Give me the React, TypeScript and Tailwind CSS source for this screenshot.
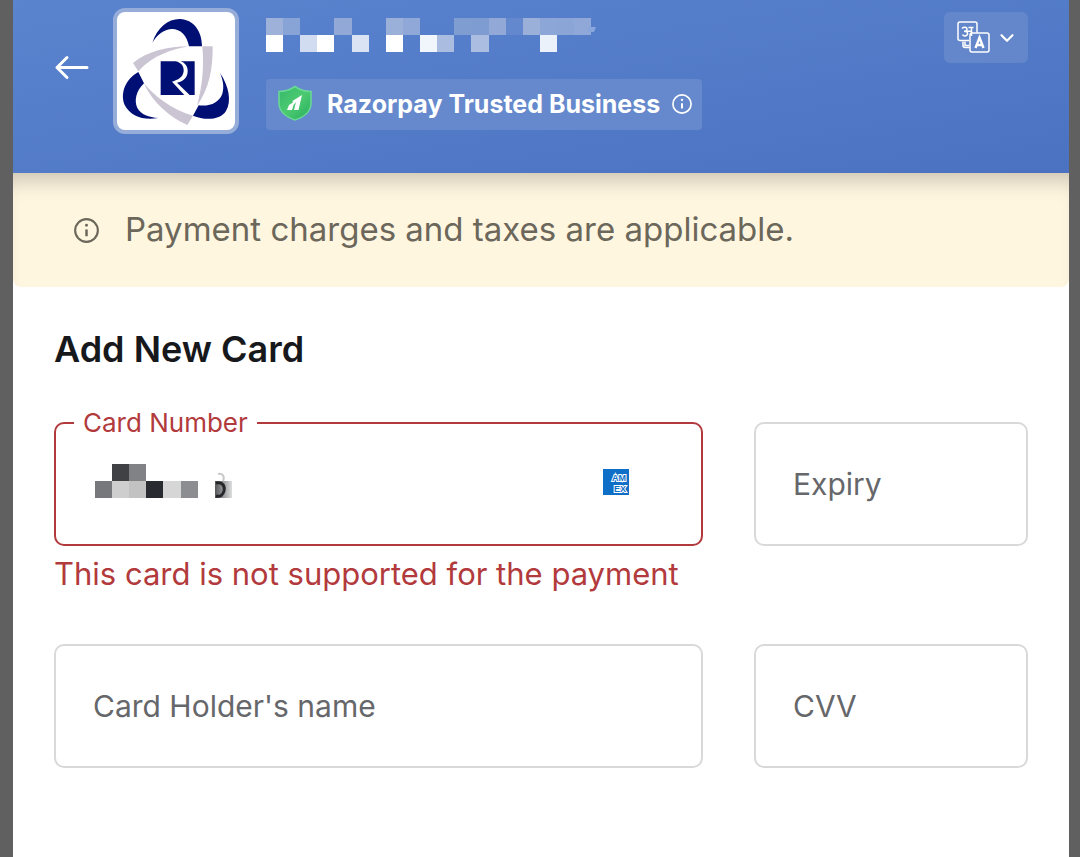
import { ChevronDown } from "lucide-react";

const CELL = 17;

type Cell = [col: number, row: number, color: string];

const nameCells: Cell[] = [
  [0, 0, "#9db1d9"], [1, 0, "#88a3d5"], [4, 0, "#92a9d8"], [7, 0, "#9ab0d9"], [8, 0, "#8fa8d7"],
  [11, 0, "#809dd2"], [12, 0, "#7f9cd2"], [13, 0, "#92a9d8"], [14, 0, "#6488cd"],
  [15, 0, "#9ab0d9"], [16, 0, "#8ba6d7"], [17, 0, "#8ba6d6"], [18, 0, "#8fa8d7"],
  [0, 1, "#ffffff"], [2, 1, "#d2dcf0"], [3, 1, "#ffffff"], [5, 1, "#dae3f3"], [7, 1, "#ffffff"],
  [9, 1, "#f1f5fc"], [10, 1, "#aabce0"], [12, 1, "#abbde1"], [16, 1, "#eaf1fb"],
];

const numberCells: Cell[] = [
  [1, 0, "#404145"], [2, 0, "#818286"], [0, 1, "#77787c"], [1, 1, "#cececf"], [2, 1, "#c2c2c3"],
  [3, 1, "#282c30"], [4, 1, "#d6d6d7"], [5, 1, "#8c8d90"],
];

function Cells({ cells }: { cells: Cell[] }) {
  return (
    <g shapeRendering="crispEdges">
      {cells.map(([c, r, fill]) => (
        <rect
          key={`${c}-${r}`}
          x={Math.round(c * 17.12)}
          y={r * CELL}
          width={Math.round((c + 1) * 17.12) - Math.round(c * 17.12)}
          height={CELL}
          fill={fill}
        />
      ))}
    </g>
  );
}

function InfoIcon({ className }: { className: string }) {
  return (
    <svg viewBox="0 0 24 24" fill="none" stroke="currentColor" className={className} aria-hidden="true">
      <circle cx="12" cy="12" r="10.9" strokeWidth="2" />
      <path d="M12 11v6.5" strokeWidth="2.4" />
      <circle cx="12" cy="7" r="1.4" fill="currentColor" stroke="none" />
    </svg>
  );
}

function MerchantLogo() {
  return (
    <svg viewBox="37 36 354 354" className="size-full" role="img" aria-label="Merchant logo">
      <g fill="#cbc5d3">
        <path d="M85 189C125 155 190 139 253 139C205 147 145 165 101 214Z" />
        <path d="M293 139H324C325 205 313 268 277 317C292 262 299 205 293 139Z" />
        <path d="M117 249C150 288 199 328 265 347L248 375C195 352 145 309 117 249Z" />
      </g>
      <g fill="#000f73">
        <path d="M143 129C157 82 192 56 226 57C266 59 292 92 292 139H253C247 105 226 86 200 87C175 89 155 107 143 129Z" />
        <path d="M101 216L118 250C94 273 88 302 98 324C109 344 133 352 161 354C116 363 76 347 60 315C46 280 62 238 101 216Z" />
        <path d="M346 219C372 257 382 304 364 333C346 362 298 361 265 347L282 316C317 320 344 307 353 281C359 260 355 240 346 219Z" />
        <path d="M168 184H213C230 188 238 199 237 214C235 232 220 240 202 245L239 285H168Z" />
        <path d="M228 184H270V285H255L217 248C240 242 249 230 249 212C249 200 242 189 228 184Z" />
      </g>
    </svg>
  );
}

function ShieldIcon() {
  return (
    <svg viewBox="0 0 36 38" className="h-[38px] w-9 shrink-0" aria-hidden="true">
      <defs>
        <linearGradient id="shield" x1="0" y1="0" x2="1" y2="1">
          <stop offset="0" stopColor="#35b86a" />
          <stop offset="0.5" stopColor="#4cca72" />
          <stop offset="1" stopColor="#27ae5c" />
        </linearGradient>
      </defs>
      <path
        d="M18 1.500C23 5 28 6.500 34 6.500V18C34 27 26 32.500 18 35C10 32.500 2 27 2 18V6.500C8 6.500 13 5 18 1.500Z"
        fill="url(#shield)"
        stroke="#68d896"
        strokeWidth="1.6"
      />
      <path d="M25 10L21.500 25H17L19 17L16.500 20L15 25H10L12 20L16 17.500L15.500 16Z" fill="#fff" />
    </svg>
  );
}

function LanguageIcon() {
  return (
    <svg viewBox="0 0 34 34" fill="none" stroke="currentColor" strokeWidth="1.5" className="size-[34px]" aria-hidden="true">
      <path d="M13 19.500H4a2 2 0 0 1-2-2V3a2 2 0 0 1 2-2h15a2 2 0 0 1 2 2v8.500" />
      <rect x="14" y="12" width="19" height="19" rx="2" />
      <path d="M6 7.500c2-2 5-1.500 5 .7c0 1.500-1.500 2-3 2c2.500 0 4 1 3.500 2.800c-.5 2.500-4 2.500-5 .5M11 10.200h4.500M15.500 6.500v8.500M12.500 6.500h5" strokeWidth="1.500" />
      <path d="M7 20.500v4q0 2 2 2h4.500M9 20.500v4h4" strokeWidth="1.500" />
      <path d="M19.500 27l4-10.500l4 10.500M21 24h5" strokeWidth="2.400" />
    </svg>
  );
}

function AmexIcon() {
  return (
    <svg
      viewBox="0 0 26 26"
      className="size-[26px] shrink-0 overflow-hidden font-['Liberation_Sans',sans-serif] text-[9px] font-bold"
      role="img"
      aria-label="American Express"
    >
      <rect width="26" height="26" fill="#0f6fc6" />
      <g fill="#0f6fc6" stroke="#fff" strokeWidth="2" paintOrder="stroke">
        <text x="9" y="12">AM</text>
        <text x="11" y="23">EX</text>
      </g>
    </svg>
  );
}

const plainField =
  "h-[124px] w-full min-w-0 rounded-[10px] border-2 border-[#d9d9da] bg-white px-[37px] text-[30px] text-[#17181c] outline-none placeholder:text-[#66676a] placeholder:opacity-100";

export default function App() {
  return (
    <div className="min-h-screen bg-[#606060] pr-[11px] pl-[13px] font-['Inter','Liberation_Sans',sans-serif]">
      <main className="min-h-screen bg-white">
        <header className="flex items-start bg-linear-to-br from-[#5b84cf] to-[#4a72c1] pt-2 pr-[41px] pb-[39px] pl-[39px] text-white">
          <button type="button" aria-label="Back" className="mt-10 flex size-10 shrink-0 items-center justify-center">
            <svg viewBox="0 0 40 40" fill="none" stroke="currentColor" strokeWidth="3" strokeLinecap="round" strokeLinejoin="round" className="size-10" aria-hidden="true">
              <path d="M35 19.500H5M15 9.500L5 19.500L15 29.500" />
            </svg>
          </button>
          <div className="ml-[21px] size-[126px] shrink-0 rounded-xl border-4 border-[#96add9] bg-white">
            <MerchantLogo />
          </div>
          <div className="ml-[27px] flex flex-col items-start pt-[10px]">
            <svg viewBox="0 0 332 34" className="h-[34px] w-[332px]" role="img" aria-label="Merchant name hidden">
              <Cells cells={nameCells} />
              <path d="M322 9H330L328 14H322Z" fill="#88a5dc" />
            </svg>
            <div className="mt-[27px] flex h-[51px] items-center rounded-sm bg-[#6589cc] pr-[10px] pb-[2px] pl-[11px]">
              <ShieldIcon />
              <span className="ml-[14px] text-[25px] leading-8 font-bold whitespace-nowrap">Razorpay Trusted Business</span>
              <button type="button" aria-label="About trusted businesses" className="ml-3">
                <InfoIcon className="size-5 overflow-visible" />
              </button>
            </div>
          </div>
          <button
            type="button"
            aria-label="Change language"
            className="mt-1 ml-auto flex h-[51px] w-[84px] shrink-0 items-center justify-between rounded-md bg-[#6387ca] pr-[10px] pl-3"
          >
            <LanguageIcon />
            <ChevronDown className="size-[22px]" strokeWidth={2.4} />
          </button>
        </header>

        <div className="flex h-[114px] items-center rounded-b-lg bg-[#fff6e0] pl-[61px] text-[#6c675b] shadow-[inset_0_20px_20px_-12px_rgba(0,0,0,0.2)]">
          <InfoIcon className="size-[25px] shrink-0 overflow-visible" />
          <p className="ml-[26px] text-[33px]">Payment charges and taxes are applicable.</p>
        </div>

        <form className="px-[41px] pt-10" onSubmit={(e) => e.preventDefault()}>
          <h1 className="text-[36px] leading-[44px] font-semibold text-[#17181c]">Add New Card</h1>
          <div className="mt-[39px] grid grid-cols-[649fr_274fr] gap-x-[51px]">
            <div className="min-w-0">
              <fieldset className="h-[136px] min-w-0 rounded-[10px] border-2 border-[#b23a3c] pl-[18px]">
                <legend className="h-[26px] px-[9px] text-[26px] leading-[26px] text-[#b23a3c]">
                  <label htmlFor="card-number">Card Number</label>
                </legend>
                <div className="flex h-[92px] items-center pr-[72px] pl-[21px]">
                  <svg viewBox="0 0 140 36" className="h-9 w-[140px] shrink-0" aria-hidden="true">
                    <defs>
                      <linearGradient id="fade">
                        <stop offset="0" stopColor="#55575a" />
                        <stop offset="1" stopColor="#dededf" />
                      </linearGradient>
                    </defs>
                    <Cells cells={numberCells} />
                    <rect x="120" y="17" width="17" height="17" fill="url(#fade)" />
                    <path d="M121 19C128 18 130 22 129 27C128 31 125 33 121 32" fill="none" stroke="#242629" strokeWidth="3" />
                    <path d="M123 10C128 9 130 13 128 17" fill="none" stroke="#c9c9c9" strokeWidth="2" />
                  </svg>
                  <input id="card-number" inputMode="numeric" aria-invalid="true" aria-describedby="card-error" className="h-full min-w-0 flex-1 bg-transparent text-[30px] outline-none" />
                  <AmexIcon />
                </div>
              </fieldset>
              <p id="card-error" className="mt-[10px] text-[31px] leading-9 text-[#b23a3c]">
                This card is not supported for the payment
              </p>
            </div>
            <div className="min-w-0 pt-3">
              <input aria-label="Expiry" placeholder="Expiry" className={plainField} />
            </div>
          </div>
          <div className="mt-[52px] grid grid-cols-[649fr_274fr] gap-x-[51px]">
            <input aria-label="Card Holder's name" placeholder="Card Holder's name" className={plainField} />
            <input aria-label="CVV" placeholder="CVV" className={plainField} />
          </div>
        </form>
      </main>
    </div>
  );
}
